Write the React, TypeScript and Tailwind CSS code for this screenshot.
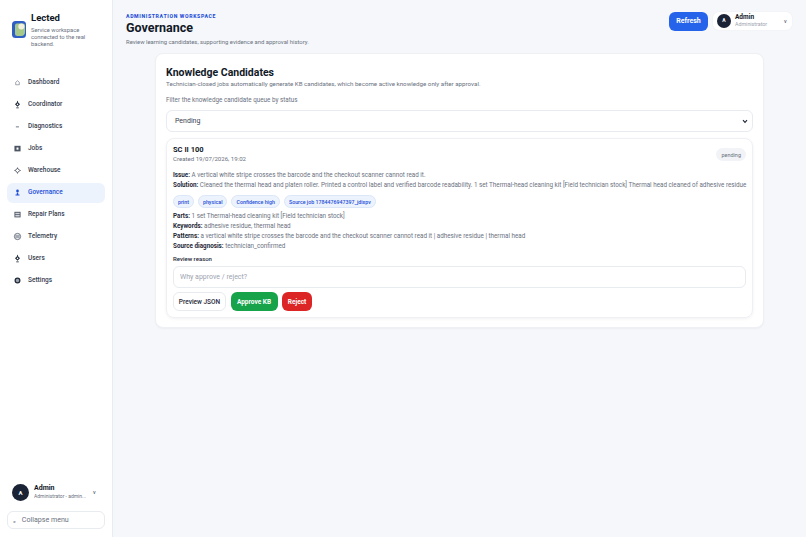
import type { ReactNode } from 'react'

const font = { fontFamily: 'Roboto, "Noto Sans", sans-serif' }

function Logo() {
  return (
    <svg width="14" height="17" viewBox="0 0 14 17">
      <rect width="14" height="17" rx="3.5" fill="#2f5fc4" />
      <path d="M3 4.5a2 2 0 0 1 2-2h6a2 2 0 0 1 2 2v6.5a4 4 0 0 1-4 4H5.5A2.5 2.5 0 0 1 3 12.5z" fill="#a6c98a" />
      <circle cx="9.3" cy="5.6" r="3" fill="#f3f1de" />
    </svg>
  )
}

const pin = (
  <>
    <path d="M5 2 7.8 4.8 5 7.6 2.2 4.8z" fill="#1f2937" />
    <circle cx="5" cy="4.8" r="0.9" fill="#fff" />
    <path d="M5 1v1.5M3.6 8.7h2.8" stroke="#1f2937" strokeWidth="0.9" />
  </>
)

const icons: Record<string, ReactNode> = {
  Dashboard: <path d="M3 4.8 5 3l2 1.8V7.5H3z" fill="none" stroke="#6b7280" strokeWidth="0.7" />,
  Coordinator: pin,
  Diagnostics: <path d="M3.2 5.4h3.4" stroke="#374151" strokeWidth="0.8" />,
  Jobs: (
    <>
      <rect x="1.6" y="2" width="6.8" height="6.2" fill="#4b5563" />
      <rect x="3.9" y="3.9" width="2.2" height="2.4" fill="#fff" />
    </>
  ),
  Warehouse: (
    <>
      <path d="M5 2.4 7.6 5 5 7.6 2.4 5z" fill="none" stroke="#1f2937" strokeWidth="0.9" />
      <path d="M5 1.4v1M5 7.6v1M1.4 5h1M7.6 5h1" stroke="#1f2937" strokeWidth="0.5" />
    </>
  ),
  Governance: (
    <>
      <circle cx="5" cy="3.2" r="1.5" fill="#1d4ed8" />
      <path d="M4.2 5h1.6v2.2h1.4v1H2.8v-1h1.4z" fill="#1d4ed8" />
    </>
  ),
  'Repair Plans': (
    <>
      <rect x="1.6" y="2" width="6.8" height="6.2" fill="#4b5563" />
      <path d="M2.6 4.6h4.8V3H2.6zM2.6 5.6h4.8v1.6H2.6z" fill="#d1d5db" />
    </>
  ),
  Telemetry: (
    <>
      <circle cx="5" cy="5" r="3.5" fill="#e5e7eb" stroke="#4b5563" strokeWidth="0.8" />
      <path d="M2.6 4.3h4.8M2.6 5.7h4.8" stroke="#4b5563" strokeWidth="0.7" />
    </>
  ),
  Users: pin,
  Settings: (
    <>
      <circle cx="5" cy="5" r="2.6" fill="#9ca3af" stroke="#1f2937" strokeWidth="1.4" />
    </>
  ),
}

const nav = ['Dashboard', 'Coordinator', 'Diagnostics', 'Jobs', 'Warehouse', 'Governance', 'Repair Plans', 'Telemetry', 'Users', 'Settings']

function Sidebar() {
  return (
    <aside className="w-[113px] h-[537px] shrink-0 bg-white border-r border-[#e8ebf0] flex flex-col">
      <div className="flex items-center gap-[5px] pl-3 pt-[11px]">
        <Logo />
        <div className="w-[62px]">
          <div className="text-[9.5px] leading-[14px] font-bold text-[#111827]">Lected</div>
          <div className="text-[5.8px] leading-[7.2px] text-[#6b7280] mt-[2px]">Service workspace connected to the real backend.</div>
        </div>
      </div>
      <nav className="flex flex-col gap-[2px] px-[7px] mt-[24px]">
        {nav.map((item) => (
          <div
            key={item}
            className={`h-5 flex items-center gap-[6px] pl-[6px] rounded-md text-[6.5px] font-medium ${item === 'Governance' ? 'bg-[#edf3fd] text-[#1d4ed8]' : 'text-[#374151]'}`}
          >
            <svg width="9" height="9" viewBox="0 0 10 10" className="shrink-0">{icons[item]}</svg>
            {item}
          </div>
        ))}
      </nav>
      <div className="mt-auto px-[7px] pb-2">
        <div className="flex items-center gap-[5px] pl-[5px] h-[18px] mb-[10px]">
          <div className="w-[17px] h-[17px] shrink-0 rounded-full bg-[#1a2436] text-white text-[6px] font-bold flex items-center justify-center">A</div>
          <div className="w-[53px] shrink-0">
            <div className="text-[7px] leading-[8px] font-bold text-[#111827]">Admin</div>
            <div className="text-[5px] leading-[8px] text-[#6b7280] whitespace-nowrap">Administrator - admin...</div>
          </div>
          <span className="text-[5.5px] text-[#374151] ml-[1px]">v</span>
        </div>
        <div className="h-[18px] border border-[#e8ebf0] rounded-md flex items-center gap-[6px] pl-[5px] text-[7.1px] text-[#6b7280]">
          <span className="text-[6px]">«</span>
          Collapse menu
        </div>
      </div>
    </aside>
  )
}

function Chip({ children }: { children: ReactNode }) {
  return <span className="h-[13px] px-1 rounded-full bg-[#edf3fd] border border-[#dbe6f8] text-[#1d4ed8] text-[5.3px] font-medium flex items-center">{children}</span>
}

function Field({ label, children }: { label: string; children: ReactNode }) {
  return (
    <div className="whitespace-nowrap">
      <b className="font-bold text-[#1f2937]">{label}</b> {children}
    </div>
  )
}

export default function App() {
  return (
    <div className="w-[806px] h-[537px] overflow-hidden flex bg-[#f5f7fa]" style={font}>
      <Sidebar />
      <main className="flex-1 min-w-0 pl-[13px] pr-[14px]">
        <header className="flex justify-between h-[53px]">
          <div className="pt-[13px]">
            <div className="text-[5.2px] leading-[6px] font-extrabold tracking-[0.12em] text-[#1d4ed8]">ADMINISTRATION WORKSPACE</div>
            <h1 className="text-[12.5px] leading-[17px] font-bold text-[#111827]">Governance</h1>
            <p className="text-[5.9px] leading-[8px] text-[#6b7280] mt-[2px]">Review learning candidates, supporting evidence and approval history.</p>
          </div>
          <div className="flex items-start gap-[5px] pt-3">
            <button className="w-[39px] h-[19px] rounded-md bg-[#2563eb] text-white text-[7px] font-bold">Refresh</button>
            <div className="w-[79px] h-[18px] rounded-md bg-white flex items-center pl-1 shadow-[0_0_2px_rgba(0,0,0,0.06)]">
              <div className="w-[14px] h-[14px] shrink-0 rounded-full bg-[#1a2436] text-white text-[5px] font-bold flex items-center justify-center">A</div>
              <div className="ml-1 w-[44px]">
                <div className="text-[6.5px] leading-[7px] font-bold text-[#111827]">Admin</div>
                <div className="text-[5.3px] leading-[7px] text-[#9ca3af]">Administrator</div>
              </div>
              <span className="text-[5.5px] text-[#374151] ml-[5px]">v</span>
            </div>
          </div>
        </header>
        <section className="ml-[29px] w-[609px] h-[275px] bg-white rounded-lg border border-[#eef0f4] px-[10px] pt-[12px] shadow-[0_1px_2px_rgba(0,0,0,0.04)]">
          <h2 className="text-[10.5px] leading-[14px] font-bold text-[#111827]">Knowledge Candidates</h2>
          <p className="text-[6.2px] leading-[8px] text-[#6b7280]">Technician-closed jobs automatically generate KB candidates, which become active knowledge only after approval.</p>
          <div className="text-[6.3px] leading-[8px] text-[#6b7280] mt-[8px]">Filter the knowledge candidate queue by status</div>
          <div className="h-[22px] mt-[6px] border border-[#e8ebf0] rounded-md flex items-center justify-between pl-2 pr-1 text-[7px] text-[#374151]">
            Pending
            <svg width="6" height="5" viewBox="0 0 6 5"><path d="M1 1.2 3 3.4l2-2.2" fill="none" stroke="#1f2937" strokeWidth="1.1" /></svg>
          </div>
          <article className="mt-[6px] h-[180px] rounded-lg border border-[#eef0f4] px-[6px] pt-[6px] shadow-[0_1px_3px_rgba(0,0,0,0.06)] relative text-[6.3px] leading-[10px] text-[#6b7280]">
            <span className="absolute right-[6px] top-[9px] h-[13px] px-[5px] rounded-full bg-[#f1f3f6] text-[#6b7280] text-[5.5px] flex items-center">pending</span>
            <div className="text-[7.5px] leading-[9px] font-bold text-[#111827]">SC II 100</div>
            <div className="text-[6.1px] leading-[9px]">Created 19/07/2026, 19:02</div>
            <div className="mt-[7px]">
              <Field label="Issue:">A vertical white stripe crosses the barcode and the checkout scanner cannot read it.</Field>
              <Field label="Solution:">Cleaned the thermal head and platen roller. Printed a control label and verified barcode readability. 1 set Thermal-head cleaning kit [Field technician stock] Thermal head cleaned of adhesive residue</Field>
            </div>
            <div className="flex gap-[4px] mt-[5px]">
              <Chip>print</Chip>
              <Chip>physical</Chip>
              <Chip>Confidence high</Chip>
              <Chip>Source job 1784476947397_jdixpv</Chip>
            </div>
            <div className="mt-[3px]">
              <Field label="Parts:">1 set Thermal-head cleaning kit [Field technician stock]</Field>
              <Field label="Keywords:">adhesive residue, thermal head</Field>
              <Field label="Patterns:">a vertical white stripe crosses the barcode and the checkout scanner cannot read it | adhesive residue | thermal head</Field>
              <Field label="Source diagnosis:">technician_confirmed</Field>
            </div>
            <div className="text-[#1f2937] font-medium text-[6px] mt-[3px]">Review reason</div>
            <div className="h-[22px] mt-[2px] border border-[#e8ebf0] rounded-md flex items-center pl-[6px] text-[7px] text-[#9ca3af]">Why approve / reject?</div>
            <div className="flex gap-[4.5px] mt-[4px]">
              <button className="h-[19px] w-[53px] rounded-md border border-[#e8ebf0] text-[#1f2937] text-[6.5px] font-medium">Preview JSON</button>
              <button className="h-[19px] w-[47px] rounded-md bg-[#16a34a] text-white text-[6.5px] font-bold">Approve KB</button>
              <button className="h-[19px] w-[30px] rounded-md bg-[#dc2626] text-white text-[6.5px] font-bold">Reject</button>
            </div>
          </article>
        </section>
      </main>
    </div>
  )
}
